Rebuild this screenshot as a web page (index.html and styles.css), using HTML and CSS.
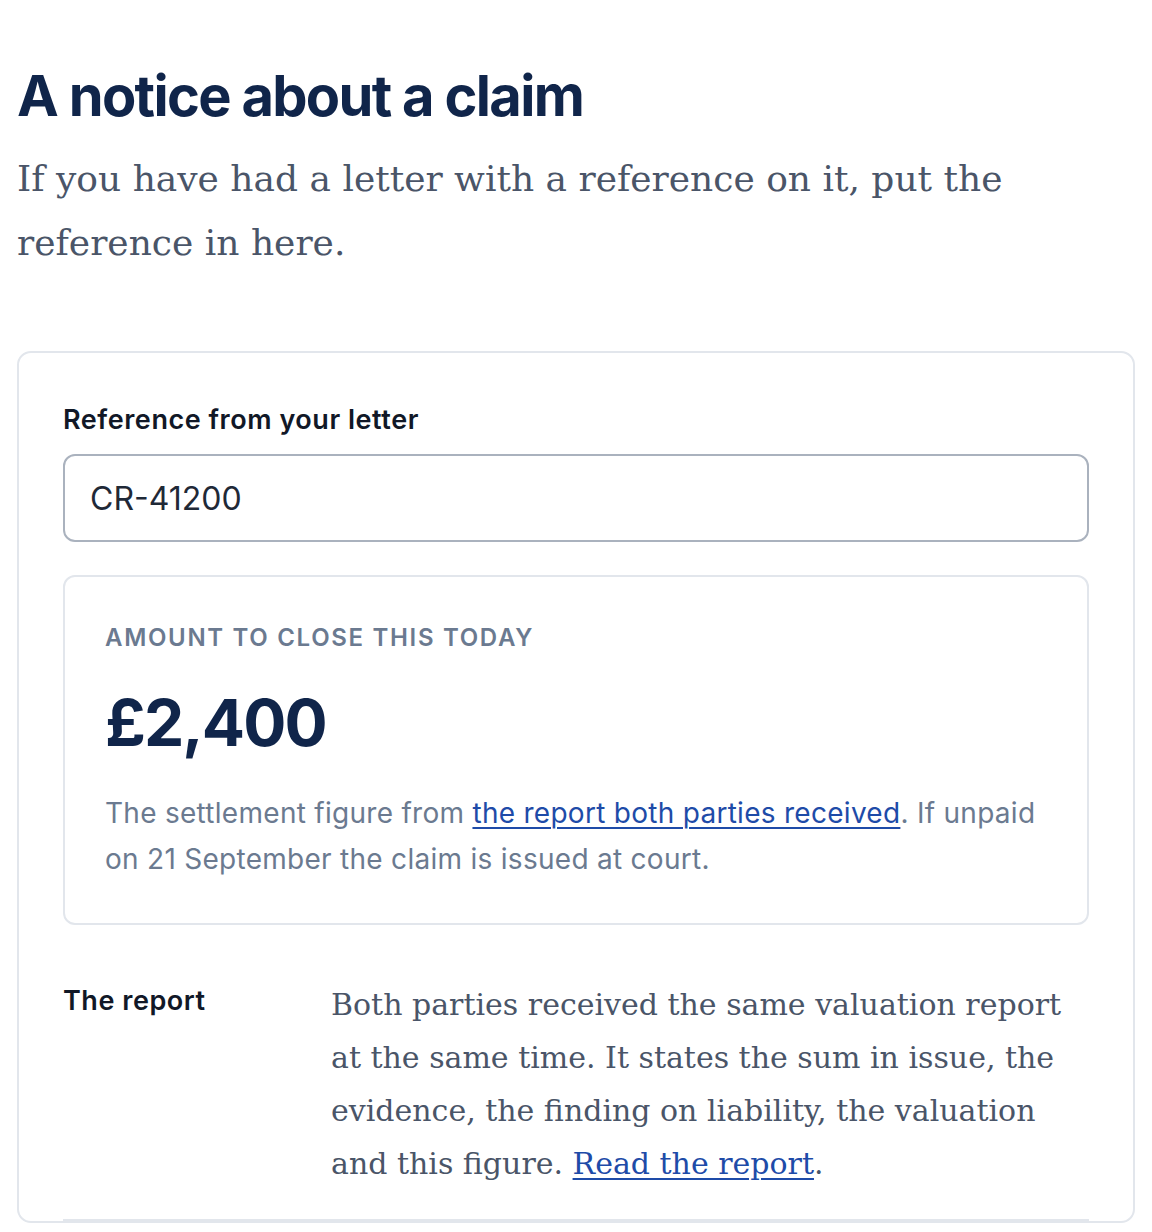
FILE: index.html
```html
<!DOCTYPE html>
<html lang="en">
<head>
  <meta charset="UTF-8" />
  <meta name="viewport" content="width=device-width, initial-scale=1" />
  <title>A notice about a claim</title>
  <link rel="stylesheet" href="styles.css">
</head>
<body>
  <main class="page">
    <h1>A notice about a claim</h1>
    <p class="intro">If you have had a letter with a reference on it, put the reference in here.</p>

    <section class="card">
      <label class="field-label" for="ref">Reference from your letter</label>
      <input class="field-input" id="ref" type="text" value="CR-41200" />

      <div class="amount">
        <div class="eyebrow">Amount to close this today</div>
        <div class="figure">£2,400</div>
        <p class="amount-note">The settlement figure from <a href="#">the report both parties received</a>. If unpaid on 21 September the claim is issued at court.</p>
      </div>

      <div class="row">
        <div class="row-label">The report</div>
        <p class="row-text">Both parties received the same valuation report at the same time. It states the sum in issue, the evidence, the finding on liability, the valuation and this figure. <a href="#">Read the report</a>.</p>
      </div>
    </section>
  </main>
</body>
</html>
```

FILE: styles.css
```css
body {
  margin: 0;
  padding: 0;
  background-color: #ffffff;
  font-family: Inter, "Noto Sans", sans-serif;
  color: #111827;
}

.page {
  padding: 64px 16px 40px 17px;
}

h1 {
  margin: 0;
  font-size: 56px;
  line-height: 64px;
  font-weight: 700;
  letter-spacing: -0.03em;
  color: #10254a;
}

.intro {
  margin: 19px 0 0;
  font-family: "DejaVu Serif", serif;
  font-size: 36px;
  line-height: 64px;
  color: #4a5568;
  max-width: 1020px;
}

.card {
  margin-top: 76px;
  border: 2px solid #e2e6ec;
  border-radius: 14px;
  padding: 50px 44px 0;
  width: 1118px;
  box-sizing: border-box;
}

.field-label {
  display: block;
  font-size: 27px;
  font-weight: 600;
  letter-spacing: 0.02em;
  line-height: 34px;
  color: #111827;
}

.field-input {
  display: block;
  box-sizing: border-box;
  width: 100%;
  height: 88px;
  margin-top: 17px;
  padding: 0 25px;
  border: 2px solid #aab2be;
  border-radius: 12px;
  font-family: Inter, "Noto Sans", sans-serif;
  font-size: 32px;
  color: #1f2937;
  background: #fff;
}

.amount {
  margin-top: 33px;
  border: 2px solid #e2e6ec;
  border-radius: 12px;
  padding: 46px 40px 41px;
}

.eyebrow {
  font-size: 24px;
  font-weight: 600;
  letter-spacing: 0.07em;
  text-transform: uppercase;
  line-height: 30px;
  color: #6b7a90;
}

.figure {
  margin-top: 34px;
  font-size: 64px;
  font-weight: 700;
  letter-spacing: -0.03em;
  line-height: 72px;
  color: #10254a;
}

.amount-note {
  margin: 31px 0 0;
  font-size: 28px;
  line-height: 46px;
  letter-spacing: 0.01em;
  color: #6b7a90;
}

a {
  color: #1e4ba8;
  text-decoration: underline;
  text-decoration-thickness: 2px;
  text-underline-offset: 4px;
}

.row {
  display: grid;
  grid-template-columns: 244px 1fr;
  gap: 24px;
  padding: 56px 0 29px;
  border-bottom: 2px solid #e2e6ec;
}

.row-label {
  font-size: 27px;
  font-weight: 600;
  letter-spacing: 0.02em;
  line-height: 40px;
  color: #111827;
}

.row-text {
  margin: -3px 0 0;
  font-family: "DejaVu Serif", serif;
  font-size: 30px;
  line-height: 53px;
  color: #4a5568;
}
```
